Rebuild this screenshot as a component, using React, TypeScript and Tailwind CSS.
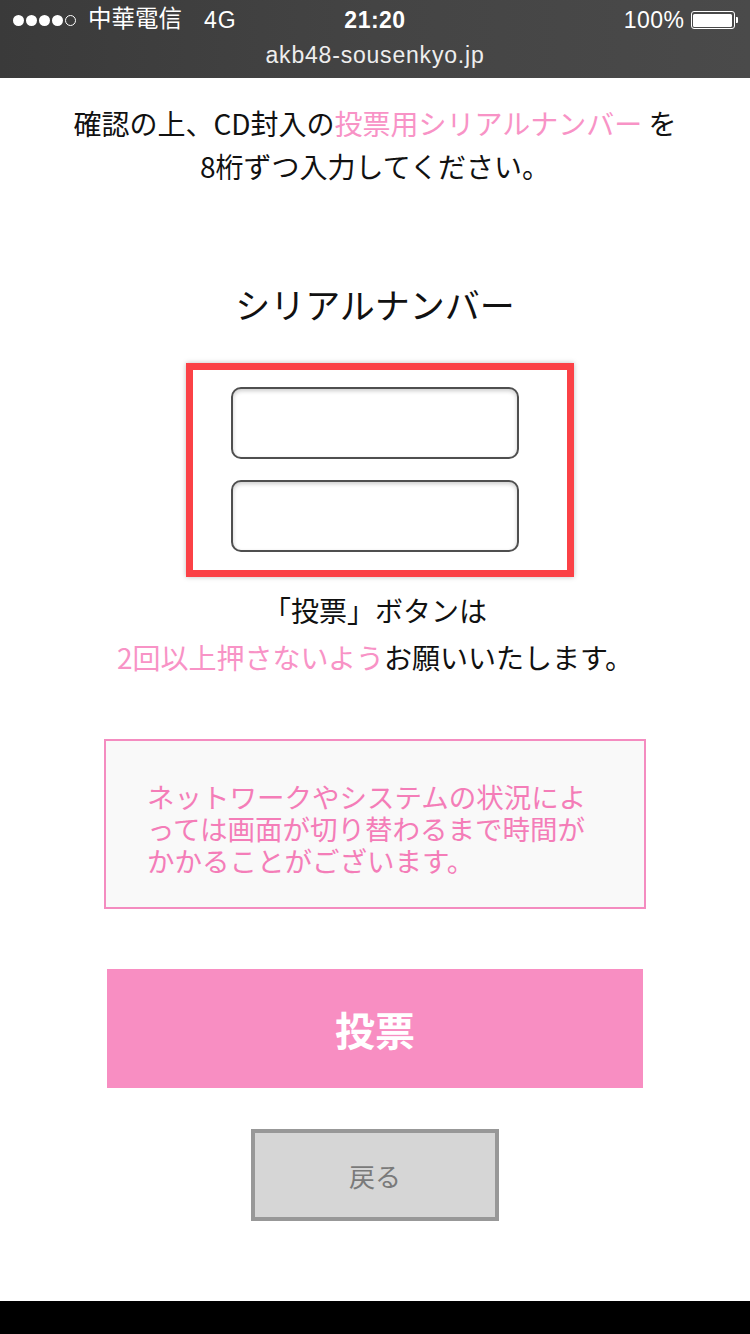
import React from "react";

const jp = { fontFamily: '"Noto Sans CJK JP", "Noto Sans", sans-serif' };

function StatusBar() {
  return (
    <div
      className="h-[78px] bg-gradient-to-r from-[#3a3a3a] via-[#444444] to-[#4a4a4a] text-white flex flex-col"
      style={{ fontFamily: '"Liberation Sans", "Noto Sans CJK TC", sans-serif' }}
    >
      <div className="h-[40px] flex items-center pl-[13px] pr-[12px] text-[23px] relative">
        <div className="flex items-center gap-[2px]">
          {[0, 1, 2, 3].map((i) => (
            <span key={i} className="w-[11px] h-[11px] rounded-full bg-white inline-block" />
          ))}
          <span className="w-[11px] h-[11px] rounded-full border border-white inline-block" />
        </div>
        <span className="ml-[12px] text-[23.5px]">中華電信</span>
        <span className="ml-[22px] tracking-[1px]">4G</span>
        <span className="absolute left-1/2 -translate-x-1/2 font-bold tracking-[0.5px]">21:20</span>
        <div className="ml-auto flex items-center">
          <span className="tracking-[0.5px]">100%</span>
          <div className="ml-[6px] flex items-center">
            <div className="w-[44px] h-[18px] rounded-[3px] border border-white p-[1.5px]">
              <div className="w-full h-full rounded-[1.5px] bg-white" />
            </div>
            <div className="w-[2.5px] h-[6px] bg-white rounded-r-[1px] ml-[1px]" />
          </div>
        </div>
      </div>
      <div className="h-[30px] flex items-center justify-center text-[23px] tracking-[0.8px] text-[#eeeeee]">
        akb48-sousenkyo.jp
      </div>
    </div>
  );
}

function SerialInput() {
  return (
    <input
      type="text"
      className="block w-[288px] h-[72px] rounded-[10px] border-2 border-[#4f4f4f] bg-white shadow-[inset_0_2px_4px_rgba(0,0,0,0.2)] outline-none"
    />
  );
}

export default function App() {
  return (
    <div className="w-[750px] h-[1334px] bg-white flex flex-col text-[#111]" style={jp}>
      <StatusBar />

      <p className="mt-[24px] text-center text-[28px] leading-[43px]">
        確認の上、CD封入の<span className="text-[#f893c6]">投票用シリアルナンバー</span> を
        <br />
        8桁ずつ入力してください。
      </p>

      <h2 className="mt-[95px] text-center text-[35px] leading-[42px]">シリアルナンバー</h2>

      <div className="mt-[38px] ml-[186px] w-[388px] h-[214px] border-[7px] border-[#fb4146] shadow-[0_0_5px_rgba(0,0,0,0.25)] pl-[38px] pt-[17px] flex flex-col gap-[21px]">
        <SerialInput />
        <SerialInput />
      </div>

      <p className="mt-[10px] text-center text-[28px] leading-[47px]">
        「投票」ボタンは
        <br />
        <span className="text-[#f893c6]">2回以上押さないよう</span>お願いいたします。
      </p>

      <div className="mt-[58px] mx-auto w-[542px] h-[170px] border-2 border-[#f48cc0] bg-[#f9f9f9] pl-[41px] pr-[40px] pt-[39px] text-[#f47db8] text-[27.5px] leading-[32px]">
        ネットワークやシステムの状況によっては画面が切り替わるまで時間がかかることがございます。
      </div>

      <button className="mt-[60px] mx-auto w-[536px] h-[119px] bg-[#f88ec2] text-white font-bold text-[40px] flex items-center justify-center">
        投票
      </button>

      <button className="mt-[41px] mx-auto w-[248px] h-[92px] bg-[#d6d6d6] border-4 border-[#989898] text-[#7a7a7a] text-[26px] flex items-center justify-center">
        戻る
      </button>

      <div className="flex-1" />
      <div className="h-[33px] bg-black" />
    </div>
  );
}
